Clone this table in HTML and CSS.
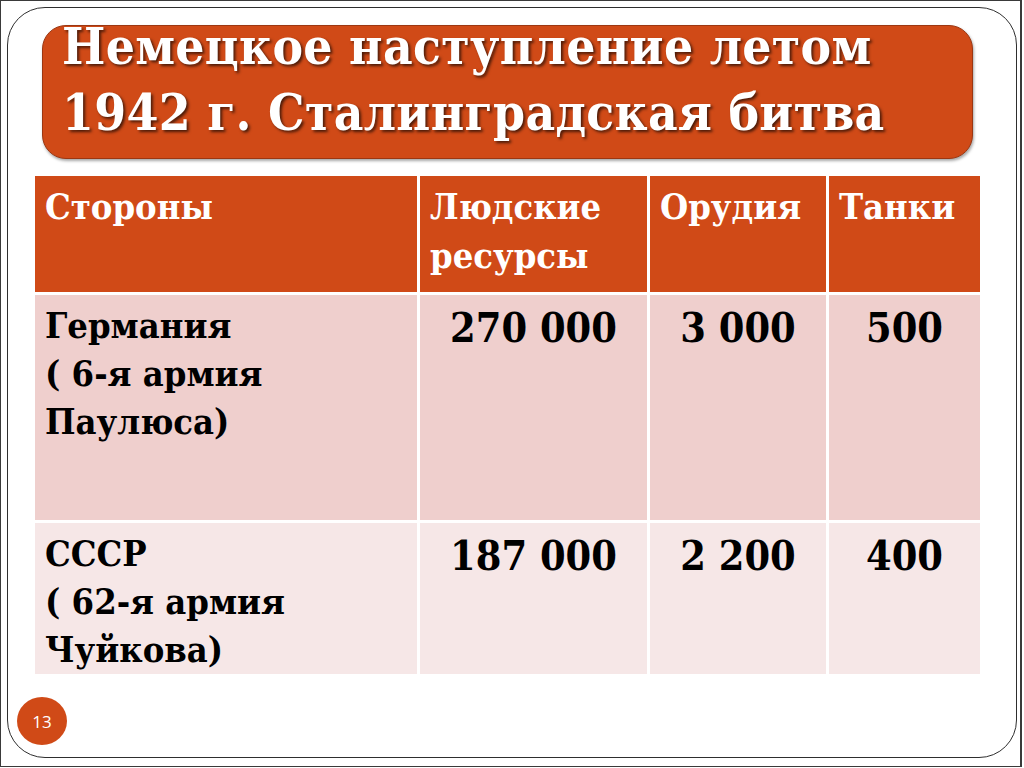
FILE: index.html
```html
<!DOCTYPE html>
<html lang="ru">
<head>
<meta charset="utf-8">
<title>Сталинградская битва</title>
<link rel="stylesheet" href="styles.css">
</head>
<body>
<div class="page">
  <div class="frame">
    <div class="title-box">
      <h1 class="title">Немецкое наступление летом<br>1942 г. Сталинградская битва</h1>
    </div>
    <div class="grid">
      <div class="cell head">Стороны</div>
      <div class="cell head">Людские ресурсы</div>
      <div class="cell head">Орудия</div>
      <div class="cell head">Танки</div>

      <div class="cell r1 side">Германия<br>( 6-я армия<br>Паулюса)</div>
      <div class="cell r1 num">270 000</div>
      <div class="cell r1 num">3 000</div>
      <div class="cell r1 num">500</div>

      <div class="cell r2 side">СССР<br>( 62-я армия<br>Чуйкова)</div>
      <div class="cell r2 num">187 000</div>
      <div class="cell r2 num">2 200</div>
      <div class="cell r2 num">400</div>
    </div>
    <div class="page-num">13</div>
  </div>
</div>
</body>
</html>
```
FILE: styles.css
```css
html, body {
  margin: 0;
  padding: 0;
  background: #ffffff;
}
.page {
  width: 1022px;
  height: 767px;
  border: 1px solid #3a3a3a;
  border-right-width: 2px;
  box-sizing: border-box;
  padding: 6px 4px 8px 6px;
  background: #ffffff;
}
.frame {
  position: relative;
  height: 751px;
  width: 1010px;
  box-sizing: border-box;
  border: 1.5px solid #2e2e2e;
  border-radius: 38px;
  padding: 17px 0 0 27px;
}
.title-box {
  width: 931px;
  height: 134px;
  margin-left: 7px;
  box-sizing: border-box;
  background: #d04a17;
  border: 1px solid #9c3712;
  border-radius: 24px;
  box-shadow: 1px 2px 3px rgba(0, 0, 0, 0.35);
  padding: 0 0 0 19px;
  overflow: visible;
}
.title {
  margin: -13px 0 0 0;
  font-family: "DejaVu Serif Condensed", "DejaVu Serif", serif;
  font-stretch: condensed;
  font-weight: bold;
  font-size: 51px;
  line-height: 66px;
  color: #ffffff;
  text-shadow: 2px 2px 3px rgba(0, 0, 0, 0.65);
  letter-spacing: 0.3px;
}
.grid {
  margin-top: 17px;
  display: grid;
  grid-template-columns: 382px 227px 176px 151px;
  grid-template-rows: 116px 225px 151px;
  column-gap: 3px;
  row-gap: 3px;
  width: 945px;
}
.cell {
  font-family: "DejaVu Serif Condensed", "DejaVu Serif", serif;
  font-stretch: condensed;
  font-weight: bold;
  box-sizing: border-box;
}
.head {
  background: #d04a17;
  color: #ffffff;
  font-size: 36px;
  line-height: 49px;
  padding: 6px 10px 0 10px;
}
.r1 { background: #efcfcd; }
.r2 { background: #f6e7e7; }
.side {
  color: #000000;
  font-size: 36px;
  line-height: 48px;
  padding: 6px 10px 0 10px;
}
.num {
  color: #000000;
  font-size: 41px;
  line-height: 56px;
  padding-top: 5px;
  text-align: center;
}
.page-num {
  position: absolute;
  left: 9px;
  bottom: 12px;
  width: 50px;
  height: 48px;
  border-radius: 50%;
  background: #d04a17;
  color: #ffffff;
  font-family: "Open Sans", "Liberation Sans", sans-serif;
  font-size: 17px;
  display: flex;
  align-items: center;
  justify-content: center;
}
```
